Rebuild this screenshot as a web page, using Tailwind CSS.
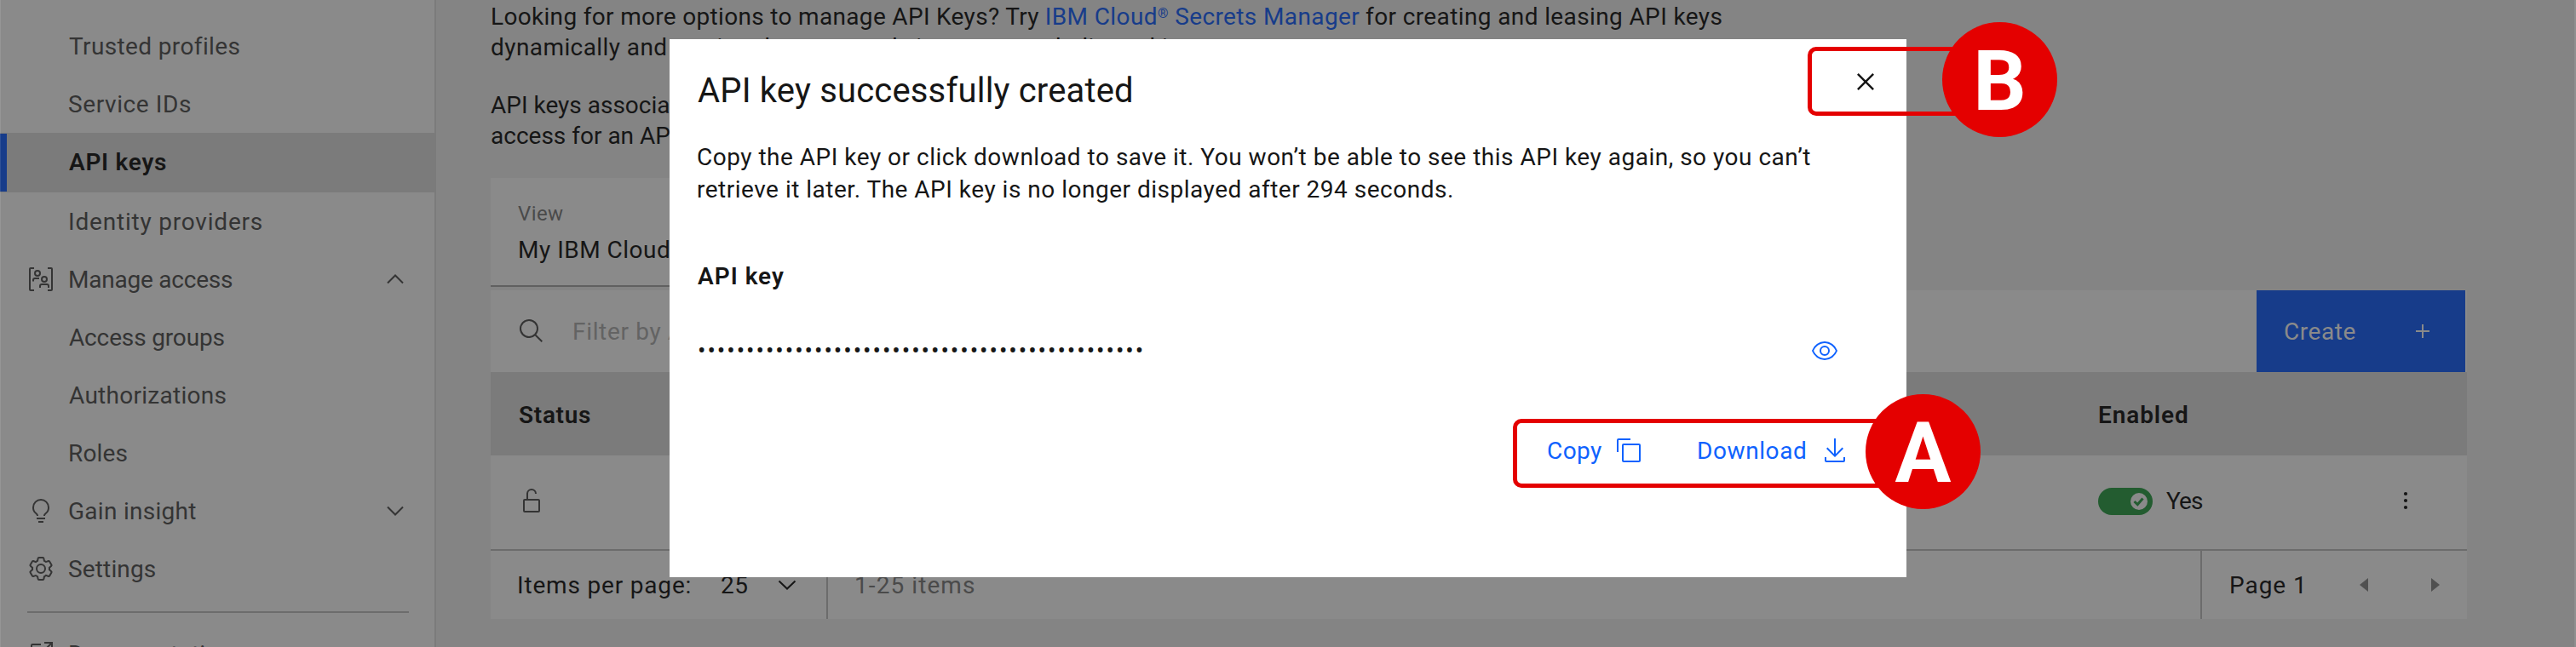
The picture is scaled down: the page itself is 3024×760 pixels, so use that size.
<!DOCTYPE html>
<html lang="en">
<head>
<meta charset="utf-8">
<title>API keys</title>
<script src="https://cdn.jsdelivr.net/npm/@tailwindcss/browser@4"></script>
</head>
<body class="bg-[#848484] font-[Roboto,sans-serif] text-[28px] leading-[33px] text-[#161616]">
<div class="relative flex h-[760px] w-[3024px] overflow-hidden bg-[#848484]">
  <aside class="flex w-[512px] shrink-0 flex-col border-r-2 border-[#7b7b7b] bg-[#8a8a8a] pt-5 text-[#343434] whitespace-nowrap">
    <a class="h-[68px] shrink-0 pt-[18px] pl-[81px] tracking-[0.37px]">Trusted profiles</a>
    <a class="h-[68px] shrink-0 pt-[18px] pl-20 tracking-[0.6px]">Service IDs</a>
    <a class="relative -mr-0.5 h-[70px] shrink-0 bg-[#7b7b7b] pt-[18px] pl-[81px] font-semibold tracking-[0.72px] text-[#161616]"><i class="absolute top-px left-0 h-[68px] w-2 bg-[#173c8a]"></i>API keys</a>
    <a class="h-[68px] shrink-0 pt-[18px] pl-20 tracking-[0.8px]">Identity providers</a>
    <a class="flex h-[68px] shrink-0 pt-[18px] pl-8">
      <svg class="mr-4 size-8" viewBox="0 0 32 32" fill="none" stroke="#343434" stroke-width="2"><path d="M8 3H4a1 1 0 0 0-1 1V28a1 1 0 0 0 1 1H8M24 3H28a1 1 0 0 1 1 1V28a1 1 0 0 1-1 1H24M7 18.500V17a2 2 0 0 1 2-2H14M15 26V24a2 2 0 0 1 2-2H23a2 2 0 0 1 2 2V26"/><circle cx="12" cy="9" r="3"/><circle cx="20" cy="16" r="3"/></svg>
      <span class="tracking-[-0.23px]">Manage access</span>
      <svg class="mr-[30px] ml-auto size-8" viewBox="0 0 32 32" fill="none" stroke="#343434" stroke-width="2"><path d="M7 20.500 16 11.500 25 20.500"/></svg>
    </a>
    <a class="h-[68px] shrink-0 pt-[18px] pl-[81px] tracking-[-0.15px]">Access groups</a>
    <a class="h-[68px] shrink-0 pt-[18px] pl-[81px] tracking-[0.28px]">Authorizations</a>
    <a class="h-[68px] shrink-0 pt-[18px] pl-20 tracking-[0.16px]">Roles</a>
    <a class="flex h-[68px] shrink-0 pt-[18px] pl-8">
      <svg class="mr-4 size-8" viewBox="0 0 32 32" fill="#343434"><path d="M11 24H21V26H11zM13 28H19V30H13zM16,2A10,10,0,0,0,6,12a9.190,9.190,0,0,0,3.460,7.620c1,.930,1.540,1.460,1.540,2.380h2c0-1.840-1.110-2.870-2.190-3.860A7.200,7.200,0,0,1,8,12a8,8,0,0,1,16,0,7.200,7.200,0,0,1-2.820,6.140c-1.070,1-2.180,2-2.180,3.860h2c0-.920.530-1.450,1.540-2.390A9.180,9.180,0,0,0,26,12,10,10,0,0,0,16,2Z"/></svg>
      <span class="tracking-[0.28px]">Gain insight</span>
      <svg class="mr-[30px] ml-auto size-8" viewBox="0 0 32 32" fill="none" stroke="#343434" stroke-width="2"><path d="M7 11.500 16 20.500 25 11.500"/></svg>
    </a>
    <a class="flex h-[68px] shrink-0 pt-[18px] pl-8">
      <svg class="mr-4 size-8" viewBox="0 0 32 32" fill="none" stroke="#343434" stroke-width="2"><path stroke="none" fill="#343434" d="M27,16.760c0-.250,0-.500,0-.760s0-.510,0-.770l1.920-1.680A2,2,0,0,0,29.300,11L26.940,7a2,2,0,0,0-1.730-1,2,2,0,0,0-.640.100l-2.430.820a11.350,11.350,0,0,0-1.310-.750l-.510-2.520a2,2,0,0,0-2-1.610H13.640a2,2,0,0,0-2,1.610l-.510,2.520a11.480,11.480,0,0,0-1.320.750L7.430,6.060A2,2,0,0,0,6.790,6,2,2,0,0,0,5.060,7L2.700,11a2,2,0,0,0,.410,2.510L5,15.240c0,.250,0,.500,0,.760s0,.510,0,.770L3.110,18.450A2,2,0,0,0,2.700,21L5.060,25a2,2,0,0,0,1.730,1,2,2,0,0,0,.640-.100l2.430-.820a11.350,11.350,0,0,0,1.310.750l.510,2.520a2,2,0,0,0,2,1.610h4.720a2,2,0,0,0,2-1.610l.510-2.520a11.480,11.480,0,0,0,1.320-.750l2.420.820a2,2,0,0,0,.640.100,2,2,0,0,0,1.730-1L29.300,21a2,2,0,0,0-.410-2.510ZM25.210,24l-3.430-1.160a8.860,8.860,0,0,1-2.710,1.570L18.360,28H13.640l-.710-3.550a9.360,9.360,0,0,1-2.700-1.570L6.790,24,4.430,20l2.720-2.400a8.900,8.900,0,0,1,0-3.130L4.430,12,6.790,8l3.430,1.160a8.860,8.860,0,0,1,2.710-1.570L13.640,4h4.720l.710,3.550a9.360,9.360,0,0,1,2.700,1.570L25.210,8,27.570,12l-2.720,2.400a8.900,8.900,0,0,1,0,3.130L27.570,20Z"/><circle cx="16" cy="16" r="5"/></svg>
      <span class="tracking-[0.15px]">Settings</span>
    </a>
    <hr class="mt-4 mr-[30px] ml-8 h-0.5 shrink-0 border-0 bg-[#6c6c6c]">
    <a class="flex shrink-0 pt-8 pl-8">
      <svg class="mr-4 size-8" viewBox="0 0 32 32" fill="#343434"><path d="M26,28H6a2,2,0,0,1-2-2V6A2,2,0,0,1,6,4H16V6H6V26H26V16h2V26A2,2,0,0,1,26,28ZM20 2V4H26.600L18 12.600 19.400 14 28 5.400V12H30V2z"/></svg>
      <span class="tracking-[0.15px]">Documentation</span>
    </a>
  </aside>

  <main class="flex w-[2384px] flex-col pt-0.5 pl-16 whitespace-nowrap">
    <p class="leading-9"><span class="tracking-[0.32px]">Looking for more options to manage API Keys? Try</span> <span class="tracking-[0.38px] text-[#173c8a]">IBM Cloud<span class="align-[8px] text-base leading-none">®</span> Secrets Manager</span> <span class="tracking-[0.38px]">for creating and leasing API keys</span><br><span class="tracking-[0.42px]">dynamically and storing them securely in your own dedicated instance.</span></p>
    <p class="mt-8 leading-9">API keys associated with a user have the<br>access for an API key</p>
    <section class="mt-[31px] h-32 w-[400px] border-b-2 border-[#606060] bg-[#8a8a8a] pl-8">
      <p class="pt-7 text-2xl leading-7 tracking-[0.39px] text-[#4a4a4a]">View</p>
      <p class="mt-3 tracking-[0.5px]">My IBM Cloud</p>
    </section>
    <section class="mt-1 flex h-24 bg-[#8a8a8a] pl-8">
      <svg class="mt-8 mr-8 size-8" viewBox="0 0 32 32" fill="#343434"><path d="M29,27.586l-7.552-7.552a11.018,11.018,0,1,0-1.414,1.414L27.586,29ZM4,13a9,9,0,1,1,9,9A9.010,9.010,0,0,1,4,13Z"/></svg>
      <span class="mt-8 tracking-[0.67px] text-[#636363]">Filter by API key</span>
      <button class="mr-0.5 ml-auto flex h-24 w-[245px] bg-[#173c8a] pt-8 pl-8 text-[#8a8a8a]"><span class="tracking-[0.55px]">Create</span><svg class="mr-[34px] ml-auto size-8" viewBox="0 0 32 32" fill="#8a8a8a"><path d="M17 15V8H15V15H8V17H15V24H17V17H24V15z"/></svg></button>
    </section>
    <section class="flex h-[98px] bg-[#7b7b7b] pt-[34px] pl-[33px] font-semibold"><span class="w-[1854px] tracking-[0.69px]">Status</span><span class="tracking-[0.9px]">Enabled</span></section>
    <section class="flex h-28 border-b-2 border-[#6c6c6c] bg-[#8a8a8a] pt-[37px] pl-8">
      <svg class="size-8" viewBox="0 0 32 32" fill="#343434"><path d="M24,14H12V8a4,4,0,0,1,8,0h2A6,6,0,0,0,10,8v6H8a2,2,0,0,0-2,2V28a2,2,0,0,0,2,2H24a2,2,0,0,0,2-2V16A2,2,0,0,0,24,14Zm0,14H8V16H24Z"/></svg>
      <svg class="mt-px ml-[1823px] h-8 w-16" viewBox="0 0 64 32"><rect width="64" height="32" rx="16" fill="#235c30"/><circle cx="48" cy="16" r="10" fill="#8a8a8a"/><path d="M42.500 16 46.300 19.500 52.500 12.500" fill="none" stroke="#235c30" stroke-width="3"/></svg>
      <span class="ml-4 tracking-[-0.9px]">Yes</span>
      <svg class="mr-14 ml-auto size-8" viewBox="0 0 32 32" fill="#161616"><circle cx="16" cy="8" r="2.100"/><circle cx="16" cy="16" r="2.100"/><circle cx="16" cy="24" r="2.100"/></svg>
    </section>
    <section class="flex h-20 bg-[#8a8a8a] pl-[31px]">
      <span class="mt-6 w-[239px] tracking-[0.82px]">Items per page:</span>
      <span class="mt-6 tracking-[0.6px]">25</span>
      <svg class="mt-6 ml-auto size-8" viewBox="0 0 32 32" fill="none" stroke="#161616" stroke-width="2"><path d="M6.500 11.500 16 20.500 25.500 11.500"/></svg>
      <span class="ml-[30px] w-[1615px] border-x-2 border-[#6c6c6c] pt-6 pl-[31px] tracking-[1.08px] text-[#4a4a4a]">1-25 items</span>
      <span class="mt-6 ml-8 w-[143px] tracking-[0.95px]">Page 1</span>
      <svg class="mt-6 size-8" viewBox="0 0 32 32" fill="#505050"><path d="M20 8V24L10 16z"/></svg>
      <svg class="mt-6 mr-[22px] ml-[50px] size-8" viewBox="0 0 32 32" fill="#505050"><path d="M12 8V24L22 16z"/></svg>
    </section>
  </main>

  <div class="absolute top-[46px] left-[786px] flex h-[632px] w-[1452px] flex-col bg-white pl-8 whitespace-nowrap">
    <header class="flex h-[120px] justify-between pr-7"><h1 class="pt-[37px] pl-px text-[40px] leading-[47px] tracking-[0.17px]">API key successfully created</h1>
      <svg class="mt-[30px] size-10" viewBox="0 0 32 32" fill="#161616"><path d="M24 9.400 22.600 8 16 14.600 9.400 8 8 9.400 14.600 16 8 22.600 9.400 24 16 17.400 22.600 24 24 22.600 17.400 16 24 9.400z"/></svg></header>
    <p class="leading-[38px] tracking-[0.5px]">Copy the API key or click download to save it. You won’t be able to see this API key again, so you can’t<br>retrieve it later. The API key is no longer displayed after 294 seconds.</p>
    <h2 class="mt-[66px] pl-px font-semibold tracking-[0.99px]">API key</h2>
    <div class="mt-[55px] flex justify-between pr-20"><span class="-mt-px pl-px tracking-[1.97px]">••••••••••••••••••••••••••••••••••••••••••••••</span>
      <svg class="size-8" viewBox="0 0 32 32" fill="#0f62fe"><path d="M30.940,15.660A16.690,16.690,0,0,0,16,5,16.690,16.690,0,0,0,1.060,15.660a1,1,0,0,0,0,.680A16.690,16.690,0,0,0,16,27,16.690,16.690,0,0,0,30.940,16.340,1,1,0,0,0,30.940,15.660ZM16,25c-5.300,0-10.900-3.930-12.930-9C5.100,10.930,10.700,7,16,7s10.900,3.930,12.930,9C26.900,21.070,21.300,25,16,25Z"/><circle cx="16" cy="16" r="5" fill="none" stroke="#0f62fe" stroke-width="2"/></svg></div>
    <div class="mt-[85px] ml-[998px] flex text-[#0f62fe]"><span class="w-20 tracking-[0.41px]">Copy</span>
      <svg class="mr-16 size-8" viewBox="0 0 32 32" fill="#0f62fe"><path d="M28,10V28H10V10H28m0-2H10a2,2,0,0,0-2,2V28a2,2,0,0,0,2,2H28a2,2,0,0,0,2-2V10a2,2,0,0,0-2-2ZM4,18H2V4A2,2,0,0,1,4,2H18V4H4Z"/></svg>
      <span class="w-[146px] tracking-[0.59px]">Download</span>
      <svg class="size-8" viewBox="0 0 32 32" fill="#0f62fe"><path d="M26,24v4H6V24H4v4a2,2,0,0,0,2,2H26a2,2,0,0,0,2-2V24ZM26 14 24.590 12.590 17 20.170V2H15V20.170L7.410 12.590 6 14 16 24z"/></svg></div>
  </div>

  <div class="absolute top-[55px] left-[2122px] h-[81px] w-[200px] rounded-[10px] border-[5px] border-[#e40000]"></div>
  <div class="absolute top-[26px] left-[2280px] flex size-[135px] justify-center rounded-full bg-[#e40000] pt-3 text-[98px] leading-[115px] font-bold text-white">B</div>
  <div class="absolute top-[492px] left-[1776px] h-[81px] w-[460px] rounded-[10px] border-[5px] border-[#e40000]"></div>
  <div class="absolute top-[463px] left-[2190px] flex size-[135px] justify-center rounded-full bg-[#e40000] pt-3 text-[98px] leading-[115px] font-bold text-white">A</div>
  <i class="absolute inset-y-0 left-0 w-px bg-white/10"></i>
  <i class="absolute inset-y-0 right-0 w-[2px] bg-white/10"></i>
</div>
</body>
</html>
